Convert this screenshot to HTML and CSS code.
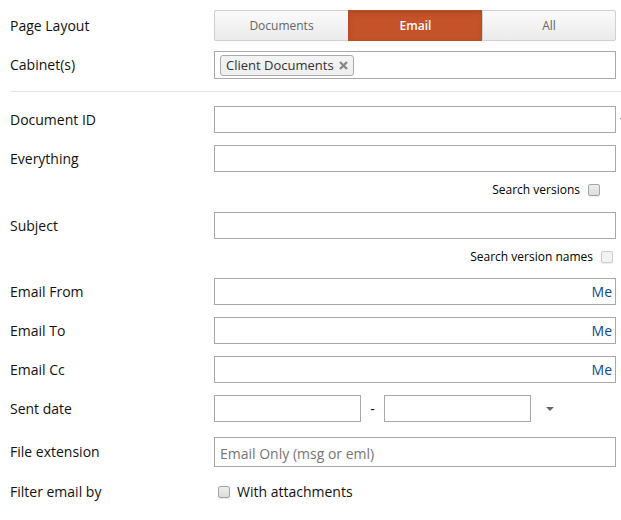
FILE: index.html
```html
<!DOCTYPE html>
<html lang="en">

<head>
    <meta charset="UTF-8">
    <meta name="viewport" content="width=device-width, initial-scale=1.0">
    <title>Advanced Search</title>
    <link rel="stylesheet" href="styles.css">
</head>

<body>
    <form class="search-form">
        <div class="row layout-row">
            <span class="label">Page Layout</span>
            <div class="tabs">
                <button type="button" class="tab">Documents</button>
                <button type="button" class="tab active">Email</button>
                <button type="button" class="tab">All</button>
            </div>
        </div>

        <div class="row">
            <label class="label" for="cabinets">Cabinet(s)</label>
            <div class="field tag-field">
                <span class="tag">Client Documents
                    <button type="button" class="tag-remove" aria-label="Remove Client Documents">
                        <svg width="9" height="9" viewBox="0 0 9 9">
                            <path d="M1 1 L8 8 M8 1 L1 8" stroke="#888" stroke-width="2.4" fill="none"/>
                        </svg>
                    </button>
                </span>
                <input type="text" id="cabinets">
            </div>
        </div>

        <hr class="divider">

        <div class="row has-more">
            <label class="label" for="document-id">Document ID</label>
            <input type="text" class="field" id="document-id">
        </div>

        <div class="row">
            <label class="label" for="everything">Everything</label>
            <input type="text" class="field" id="everything">
        </div>

        <div class="option inset">
            <label for="versions">Search versions</label>
            <input type="checkbox" id="versions">
        </div>

        <div class="row">
            <label class="label" for="subject">Subject</label>
            <input type="text" class="field" id="subject">
        </div>

        <div class="option">
            <label for="version-names">Search version names</label>
            <input type="checkbox" id="version-names" disabled>
        </div>

        <div class="row">
            <label class="label" for="email-from">Email From</label>
            <div class="field me-field">
                <input type="text" id="email-from">
                <a href="#">Me</a>
            </div>
        </div>

        <div class="row">
            <label class="label" for="email-to">Email To</label>
            <div class="field me-field">
                <input type="text" id="email-to">
                <a href="#">Me</a>
            </div>
        </div>

        <div class="row">
            <label class="label" for="email-cc">Email Cc</label>
            <div class="field me-field">
                <input type="text" id="email-cc">
                <a href="#">Me</a>
            </div>
        </div>

        <div class="row spaced">
            <label class="label" for="date-from">Sent date</label>
            <div class="dates">
                <input type="text" class="field" id="date-from">
                <span class="dash">-</span>
                <input type="text" class="field" id="date-to" aria-label="Sent date to">
                <button type="button" class="date-menu" aria-label="Date options">
                    <svg width="8" height="4" viewBox="0 0 8 4">
                        <path d="M0 0 H8 L4 4 Z" fill="#666"/>
                    </svg>
                </button>
            </div>
        </div>

        <div class="row spaced">
            <label class="label" for="extension">File extension</label>
            <input type="text" class="field tall" id="extension" placeholder="Email Only (msg or eml)">
        </div>

        <div class="row">
            <span class="label">Filter email by</span>
            <div class="filter">
                <input type="checkbox" id="attachments">
                <label for="attachments">With attachments</label>
            </div>
        </div>
    </form>
</body>

</html>
```
FILE: styles.css
```css
* {
    box-sizing: border-box;
}

body {
    margin: 0;
    background-color: #ffffff;
    color: #111;
    font-family: 'Open Sans', sans-serif;
    font-size: 14px;
    line-height: 20px;
    overflow-x: hidden;
}

input,
button {
    margin: 0;
    padding: 0;
    font: inherit;
}

.search-form {
    padding: 10px 5px 10px 10px;
}

.row {
    position: relative;
    display: grid;
    grid-template-columns: 204px 1fr;
    align-items: center;
    margin-bottom: 12px;
}

.row.layout-row {
    margin-bottom: 10px;
}

.row.spaced {
    margin-bottom: 15px;
}

.field {
    width: 100%;
    height: 27px;
    padding: 0 5px;
    border: 1px solid #a9a9a9;
    background-color: #ffffff;
}

.field.tall {
    height: 30px;
    padding-top: 2px;
}

.field::placeholder {
    color: #757575;
}

/* page layout switch */
.tabs {
    display: grid;
    grid-template-columns: repeat(3, 1fr);
    height: 31px;
}

.tab {
    border: 1px solid #d0d0d0;
    border-right: none;
    background: linear-gradient(#fafafa, #ebebeb);
    color: #666;
    font-size: 12px;
}

.tab:first-child {
    border-radius: 2px 0 0 2px;
}

.tab:last-child {
    border-right: 1px solid #d0d0d0;
    border-radius: 0 2px 2px 0;
}

.tab.active {
    border-color: #bd4b23;
    background: #c55228;
    box-shadow: inset 0 2px 5px rgba(0, 0, 0, 0.12);
    color: #ffffff;
    font-weight: 600;
}

/* cabinets */
.tag-field {
    display: flex;
    align-items: center;
    gap: 4px;
    height: 28px;
}

.tag-field input,
.me-field input {
    flex: 1;
    min-width: 0;
    border: none;
    outline: none;
}

.tag {
    display: flex;
    align-items: center;
    gap: 5px;
    height: 21px;
    padding: 0 5px;
    border: 1px solid #aaa;
    border-radius: 3px;
    background: linear-gradient(#f4f4f4, #eee);
    color: #333;
    font-size: 13px;
}

.tag-remove {
    display: flex;
    border: none;
    background: none;
}

.divider {
    margin: 0 -5px 14px 0;
    border: none;
    border-top: 1px solid #e5e5e5;
}

/* edge of the overflow marker beside the field */
.has-more::after {
    content: "";
    position: absolute;
    top: 12px;
    right: -5px;
    width: 1px;
    height: 1px;
    background-color: #888;
}

/* checkboxes */
input[type="checkbox"] {
    appearance: none;
    width: 12px;
    height: 12px;
    border: 1px solid #a5a5a5;
    border-radius: 2px;
    background: linear-gradient(#ededed, #dcdcdc);
    box-shadow: 0 1px 1px rgba(0, 0, 0, 0.08);
}

input[type="checkbox"]:checked {
    background: #666;
}

input[type="checkbox"]:disabled {
    border-color: #ccc;
    background: #f2f2f2;
}

.option {
    display: flex;
    justify-content: flex-end;
    align-items: center;
    gap: 8px;
    height: 16px;
    margin: -2px 3px 13px 0;
    color: #000;
    font-size: 12px;
}

.option.inset {
    margin-right: 16px;
    margin-bottom: 14px;
}

.me-field {
    display: flex;
    align-items: center;
    padding-right: 3px;
}

.me-field a {
    color: #0b4a99;
    text-decoration: none;
}

/* sent date */
.dates {
    display: flex;
    align-items: center;
}

.dates .field {
    flex: 0 1 147px;
    min-width: 0;
}

.dash {
    width: 23px;
    text-align: center;
}

.date-menu {
    display: flex;
    justify-content: center;
    width: 38px;
    border: none;
    background: none;
}

.filter {
    display: flex;
    align-items: center;
    gap: 7px;
    padding-left: 4px;
}
```
